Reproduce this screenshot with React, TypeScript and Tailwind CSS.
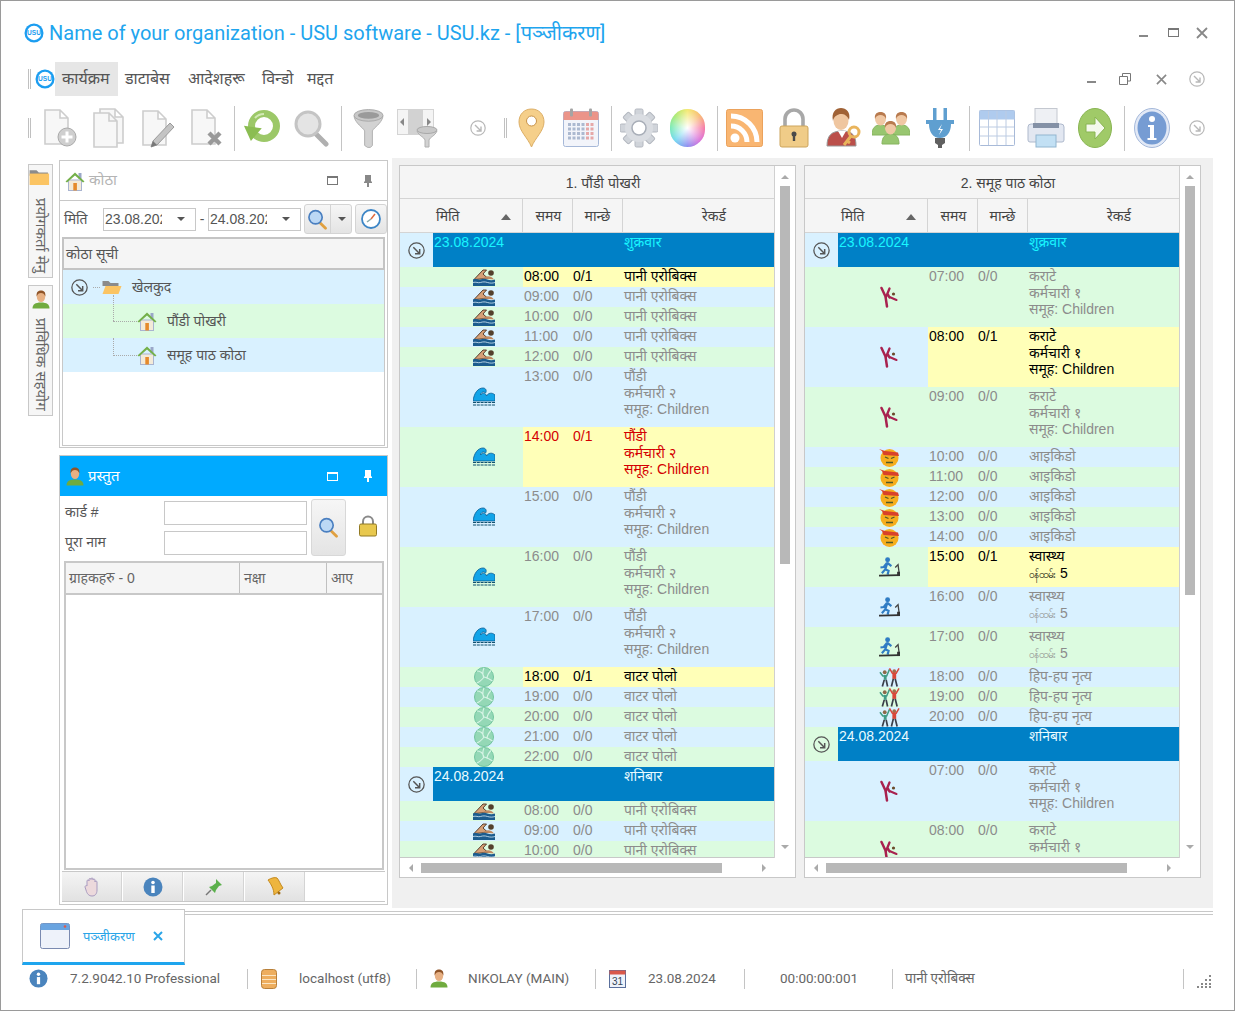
import type { ReactNode } from "react";

type IconProps = { className?: string };

function UsuLogo({ className }: IconProps) {
  return (
    <svg viewBox="0 0 20 20" className={className}>
      <circle cx="10" cy="10" r="9.5" fill="#1b9df0" />
      <circle cx="10" cy="10" r="7.2" fill="#fff" />
      <text x="10" y="12.4" textAnchor="middle" fontSize="6.6" fontWeight="700" fill="#1b9df0" fontFamily="Liberation Sans">
        USU
      </text>
    </svg>
  );
}

function CircleArrow({ className, color = "#b8b8b8" }: IconProps & { color?: string }) {
  return (
    <svg viewBox="0 0 16 16" className={className} fill="none" stroke={color}>
      <circle cx="8" cy="8" r="7.2" strokeWidth="1.2" />
      <path d="M5 5l6 6M11 6.6V11H6.6" strokeWidth="1.4" />
    </svg>
  );
}

function Doc({ x = 0, y = 0 }: { x?: number; y?: number }) {
  return (
    <path
      transform={`translate(${x} ${y})`}
      d="M1 1h15l8 8v26H1z M16 1v8h8"
      fill="#f7f7f7"
      stroke="#cdcdcd"
      strokeWidth="1.6"
    />
  );
}

function DocPlus({ className }: IconProps) {
  return (
    <svg viewBox="0 0 34 40" className={className}>
      <Doc x={1} y={1} />
      <circle cx="24" cy="29" r="9" fill="#cfcfcf" stroke="#aaa" />
      <path d="M24 23.5v11M18.5 29h11" stroke="#fff" strokeWidth="3" />
    </svg>
  );
}

function DocCopy({ className }: IconProps) {
  return (
    <svg viewBox="0 0 32 40" className={className}>
      <Doc x={7} y={0} />
      <Doc x={1} y={4} />
    </svg>
  );
}

function DocEdit({ className }: IconProps) {
  return (
    <svg viewBox="0 0 34 40" className={className}>
      <Doc x={1} y={2} />
      <path d="M29 15l4 4-17 18-6 2 2-6z" fill="#c4c4c4" stroke="#9a9a9a" />
      <path d="M10 39l2-6 4 4z" fill="#777" />
    </svg>
  );
}

function DocDelete({ className }: IconProps) {
  return (
    <svg viewBox="0 0 32 40" className={className}>
      <Doc x={1} y={1} />
      <path d="M19 25l11 11M30 25L19 36" stroke="#999" strokeWidth="4.4" />
    </svg>
  );
}

function Refresh({ className }: IconProps) {
  return (
    <svg viewBox="0 0 38 38" className={className} fill="none">
      <circle cx="21" cy="17" r="12.5" stroke="#9cc868" strokeWidth="7" />
      <path d="M0 18h18L9 32z" fill="#8bbd52" transform="rotate(8 9 24)" />
      <path d="M12 9a12 12 0 0 1 9-4" stroke="#d2e9b4" strokeWidth="2" />
    </svg>
  );
}

function Magnifier({ className, tint = "#e4e4e4", ring = "#c4c4c4", handle = "#b0b0b0" }: IconProps & { tint?: string; ring?: string; handle?: string }) {
  return (
    <svg viewBox="0 0 35 38" className={className}>
      <path d="M21 24l11 11" stroke={handle} strokeWidth="5" strokeLinecap="round" />
      <circle cx="14" cy="15" r="12" fill={tint} stroke={ring} strokeWidth="3" />
    </svg>
  );
}

function Funnel({ className }: IconProps) {
  return (
    <svg viewBox="0 0 32 40" className={className}>
      <path d="M1 8c2 8 9 11 11 15v15l3 2h3l2-2V23c2-4 9-7 11-15z" fill="#d2d2d2" stroke="#b0b0b0" />
      <ellipse cx="16" cy="7" rx="15" ry="6" fill="#c8c8c8" stroke="#a8a8a8" />
      <ellipse cx="16" cy="7" rx="11" ry="3.5" fill="#9a9a9a" />
    </svg>
  );
}

function ColumnFilter({ className }: IconProps) {
  return (
    <svg viewBox="0 0 41 40" className={className}>
      <rect x="0.5" y="1.5" width="36" height="25" fill="#f4f4f4" stroke="#d4d4d4" />
      <rect x="11" y="1.5" width="15" height="25" fill="#d2d2d2" />
      <path d="M7 10v8l-4-4zM30 10v8l4-4z" fill="#888" />
      <path d="M20 23c2 5 7 6 8 9v7h4v-7c1-3 6-4 8-9z" fill="#d2d2d2" stroke="#b0b0b0" />
      <ellipse cx="30" cy="22" rx="10" ry="3.5" fill="#c8c8c8" stroke="#a8a8a8" />
    </svg>
  );
}

function MapPin({ className }: IconProps) {
  return (
    <svg viewBox="0 0 27 40" className={className}>
      <path d="M13.5 1C6 1 1 6.5 1 14c0 9 9 16 12.5 25C17 30 26 23 26 14 26 6.5 21 1 13.5 1z" fill="#f5cf8a" stroke="#dcae66" />
      <circle cx="13.5" cy="13" r="5" fill="#fff" stroke="#c8934a" />
    </svg>
  );
}

function Calendar({ className }: IconProps) {
  const cells = [];
  for (let r = 0; r < 4; r++) {
    for (let c = 0; c < 6; c++) {
      cells.push(
        <rect key={`${r}-${c}`} x={5 + c * 4.5} y={15 + r * 4.5} width="3" height="3" fill={c > 3 ? "#e6a8a8" : "#acb9d0"} />,
      );
    }
  }
  return (
    <svg viewBox="0 0 36 40" className={className}>
      <rect x="0.5" y="3.5" width="35" height="35" rx="2" fill="#f2f4fa" stroke="#a6b8d8" />
      <path d="M0.5 12V5.5a2 2 0 0 1 2-2h31a2 2 0 0 1 2 2V12z" fill="#eb9489" />
      <rect x="7" y="0.5" width="3" height="8" rx="1" fill="#a4a4a4" />
      <rect x="26" y="0.5" width="3" height="8" rx="1" fill="#a4a4a4" />
      {cells}
    </svg>
  );
}

function Gear({ className }: IconProps) {
  const teeth = [0, 45, 90, 135];
  return (
    <svg viewBox="0 0 38 40" className={className}>
      {teeth.map((a) => (
        <rect key={a} x="15" y="1" width="8" height="38" rx="1.5" fill="#d0d4da" stroke="#b4b8c0" transform={`rotate(${a} 19 20)`} />
      ))}
      <circle cx="19" cy="20" r="14" fill="#dadde2" />
      <circle cx="19" cy="20" r="7" fill="#fff" stroke="#a8aeb8" strokeWidth="1.5" />
    </svg>
  );
}

function Rss({ className }: IconProps) {
  return (
    <svg viewBox="0 0 37 38" className={className} fill="none">
      <rect x="0.5" y="0.5" width="36" height="37" rx="2" fill="#f9b672" stroke="#eba25c" />
      <circle cx="9" cy="29" r="4.5" fill="#fff" />
      <path d="M5 17a16 16 0 0 1 16 16" stroke="#fff" strokeWidth="5" />
      <path d="M5 7a26 26 0 0 1 26 26" stroke="#fff" strokeWidth="5" />
    </svg>
  );
}

function Padlock({ className }: IconProps) {
  return (
    <svg viewBox="0 0 30 40" className={className}>
      <path d="M6 19V11a9 9 0 0 1 18 0v8" fill="none" stroke="#a8a8a8" strokeWidth="3.6" />
      <rect x="1" y="18" width="28" height="21" rx="2" fill="#f0cc88" stroke="#cda55c" />
      <circle cx="15" cy="26" r="2.5" fill="#4a4a4a" />
      <rect x="13.8" y="26" width="2.4" height="7" fill="#4a4a4a" />
    </svg>
  );
}

function PersonKey({ className }: IconProps) {
  return (
    <svg viewBox="0 0 35 40" className={className}>
      <path d="M1 38c0-10 4-15 15-15s14 5 14 15z" fill="#bb4f4a" stroke="#999" />
      <path d="M12 23l4 7 4-7z" fill="#fff" />
      <ellipse cx="15" cy="13" rx="7.5" ry="9" fill="#efc6a0" />
      <path d="M7 13C5 4 10 0 15 0s10 4 8 12c-2-5-5-6-8-6-3 0-7 2-8 7z" fill="#a06236" />
      <circle cx="28" cy="24" r="5" fill="none" stroke="#e9b45c" strokeWidth="3" />
      <path d="M25 28l-7 9M21 33l3 2" stroke="#e9b45c" strokeWidth="3" />
    </svg>
  );
}

function PeopleGroup({ className }: IconProps) {
  const one = (x: number, y: number, k: number) => (
    <g key={k} transform={`translate(${x} ${y})`}>
      <path d="M0 24c0-7 3-10 8.5-10S17 17 17 24z" fill="#98c670" stroke="#86b45e" />
      <ellipse cx="8.5" cy="8" rx="5.5" ry="6.5" fill="#f0c8a4" />
      <path d="M3 8C2 2 6 1 8.5 1S15 2 14 8c-1-3-3-4-5.500-4S4 5 3 8z" fill="#b87a4e" />
    </g>
  );
  return (
    <svg viewBox="0 0 38 40" className={className}>
      {one(0, 3, 1)}
      {one(21, 3, 2)}
      {one(10, 12, 3)}
    </svg>
  );
}

function Plug({ className }: IconProps) {
  return (
    <svg viewBox="0 0 28 42" className={className}>
      <rect x="7" y="1" width="3.5" height="13" fill="#5f9fd0" />
      <rect x="17.5" y="1" width="3.5" height="13" fill="#5f9fd0" />
      <path d="M0 13h28v4H25c0 8-4 14-11 14S3 25 3 17H0z" fill="#5f9fd0" />
      <path d="M16 17l-4 6h3l-2 5 4-6h-3z" fill="#fff" />
      <path d="M9 31h10v5l-3 2v3h-4v-3l-3-2z" fill="#606060" />
    </svg>
  );
}

function TableIcon({ className }: IconProps) {
  return (
    <svg viewBox="0 0 36 38" className={className}>
      <rect x="0.5" y="1.5" width="35" height="35" rx="1" fill="#fff" stroke="#a8bad8" />
      <rect x="0.5" y="1.5" width="35" height="9" fill="#afcbee" />
      <path d="M9.500 2v34M18 2v34M27 2v34M1 18h34M1 27h34" stroke="#bccbe2" />
    </svg>
  );
}

function Printer({ className }: IconProps) {
  return (
    <svg viewBox="0 0 38 40" className={className}>
      <rect x="8" y="0.5" width="22" height="20" fill="#eef0f4" stroke="#c4c8d0" />
      <path d="M1 19a3 3 0 0 1 3-3h30a3 3 0 0 1 3 3v13a2 2 0 0 1-2 2H3a2 2 0 0 1-2-2z" fill="#e2e7f1" stroke="#aeb9cc" />
      <rect x="6" y="15" width="26" height="5" fill="#8491a6" />
      <rect x="9" y="27" width="20" height="12" fill="#c2e0f4" stroke="#92b6d0" />
    </svg>
  );
}

function GoArrow({ className }: IconProps) {
  return (
    <svg viewBox="0 0 34 40" className={className}>
      <ellipse cx="17" cy="20" rx="16.5" ry="19.5" fill="#a0ca68" stroke="#88b452" />
      <path d="M8 16h9v-7l10 11-10 11v-7H8z" fill="#f4f9ec" stroke="#88b452" />
    </svg>
  );
}

function InfoBall({ className }: IconProps) {
  return (
    <svg viewBox="0 0 36 40" className={className}>
      <ellipse cx="18" cy="20" rx="17.5" ry="19.5" fill="#e2e9f6" stroke="#a4b8da" />
      <ellipse cx="18" cy="20" rx="14.5" ry="16.5" fill="#769cd3" />
      <circle cx="18" cy="11" r="3" fill="#fff" />
      <path d="M14 17h6v13h2.500v2h-9v-2H16V19h-2z" fill="#fff" />
    </svg>
  );
}

function SmallInfo({ className }: IconProps) {
  return (
    <svg viewBox="0 0 20 20" className={className}>
      <circle cx="10" cy="10" r="9.5" fill="#4a84bd" />
      <circle cx="10" cy="5.5" r="1.8" fill="#fff" />
      <rect x="8.3" y="8.5" width="3.4" height="7.5" fill="#fff" />
    </svg>
  );
}

function House({ className }: IconProps) {
  return (
    <svg viewBox="0 0 20 20" className={className}>
      <rect x="13.5" y="2" width="3" height="6" fill="#9aa7c8" />
      <rect x="3.5" y="9" width="13" height="10.5" fill="#f3ead8" stroke="#a9b4d0" />
      <rect x="8.3" y="12" width="3.6" height="7.5" fill="#e58a2c" />
      <path d="M0.500 10.500L10 1.500l9.500 9-1.500 1L10 4.500 2 11.500z" fill="#74b04a" />
    </svg>
  );
}

function Person({ className }: IconProps) {
  return (
    <svg viewBox="0 0 18 19" className={className}>
      <path d="M0.500 18.500c0-4 2.500-6 8.500-6s8.500 2 8.500 6z" fill="#70ab3f" />
      <ellipse cx="9" cy="6.5" rx="4.2" ry="5.5" fill="#e7b083" />
      <path d="M4.700 6.500C4 2 6.500 0.500 9 0.500s5 1.500 4.300 6c-.7-2.500-2.300-3.500-4.300-3.500S5.400 4 4.700 6.500z" fill="#8f5428" />
    </svg>
  );
}

function Folder({ className, open = false }: IconProps & { open?: boolean }) {
  return (
    <svg viewBox="0 0 20 14" className={className}>
      <path d="M0.500 13V1h6l2 2h8v3H0.500" fill="#8b8b8b" />
      {open ? <path d="M0.500 14l3-8h16l-3 8z" fill="#fbc463" /> : <rect x="0.5" y="4" width="17" height="10" fill="#fbc463" />}
    </svg>
  );
}

function Swimmer({ className }: IconProps) {
  return (
    <svg viewBox="0 0 22 17" className={className}>
      <path d="M1 10.500L10 1h3.500L10 5l5 4.500z" fill="#d6a077" stroke="#4a3020" strokeWidth="0.9" />
      <circle cx="18" cy="4" r="2.800" fill="#54402c" />
      <path d="M10 9.500c3-3 8-3 11 1z" fill="#c08a62" />
      <path d="M0 10.500c3-1.500 5 1 7.500 0s4.500-1 7 0 5 1 7.500 0V17H0z" fill="#1c5c8e" />
      <path d="M0 13.500c3-1 5 .8 7.500 0s4.500-.8 7 0 5 .8 7.500 0" stroke="#d4e8f5" strokeWidth="0.8" fill="none" />
    </svg>
  );
}

function Wave({ className }: IconProps) {
  return (
    <svg viewBox="0 0 22 20" className={className}>
      <path d="M0 14C1 6 5 1 10 1c3 0 4 3 2.500 5C11 4 8 5 7.500 8 10 5 13 6 13.500 9 15 6 19 5 22 8v6z" fill="#12a4e8" stroke="#0b5d92" strokeWidth="0.8" />
      <path d="M0 15.500h22M0 18h22" stroke="#10506f" strokeWidth="1" strokeDasharray="3 0.8" />
    </svg>
  );
}

function Volley({ className }: IconProps) {
  return (
    <svg viewBox="0 0 20 20" className={className} fill="none">
      <circle cx="10" cy="10" r="9.5" fill="#94d8b6" stroke="#70c49e" />
      <path d="M10 .8c-2 5-1 9 0 9.200 3 .5 7 3 8.500 4M10 10c-2 3-6 6-7.500 6M3 4c3 0 6 2 7 6M17 3.500c-2 2-4 4-4 8.500" stroke="#d8f4e6" strokeWidth="1.1" />
    </svg>
  );
}

function Karate({ className }: IconProps) {
  return (
    <svg viewBox="0 0 18 22" className={className} fill="none" stroke="#a8224f" strokeLinecap="round">
      <path d="M1.500 2l4 8.500 1.500 10" strokeWidth="2.500" />
      <path d="M6 11L9.500 2.500M8 8.500l1.500 3" strokeWidth="2.300" />
      <path d="M9.500 11l7 3" strokeWidth="2" />
      <circle cx="13.500" cy="8" r="1.600" fill="#6a4a2a" stroke="none" />
    </svg>
  );
}

function Aikido({ className }: IconProps) {
  return (
    <svg viewBox="0 0 20 20" className={className}>
      <circle cx="10.500" cy="11" r="9" fill="#f6ae1e" />
      <path d="M0 2l6 2 13 1.500 1 3.500-15.500-1L3 4z" fill="#d8412a" />
      <path d="M6 10l3.500 1.500M15.500 10L12 11.500M7 15.500h7" stroke="#4f5a2a" strokeWidth="1.300" fill="none" />
    </svg>
  );
}

function Treadmill({ className }: IconProps) {
  return (
    <svg viewBox="0 0 22 21" className={className} fill="none">
      <circle cx="9" cy="2.800" r="2.600" fill="#2f7cc4" />
      <path d="M8.500 6L5 10.500l-3.500.5M8.500 6l4.500 3.500M8.500 7l-2 6 3.500 1.500-1 4M6.500 13L3 17" stroke="#2f7cc4" strokeWidth="2.300" />
      <path d="M17 11l3-3 1 8" stroke="#444" strokeWidth="1.400" />
      <path d="M0 19.500l21-.5" stroke="#333" strokeWidth="1.800" />
      <path d="M19 15.500h3V20h-3z" fill="#333" />
    </svg>
  );
}

function Dancers({ className }: IconProps) {
  return (
    <svg viewBox="0 0 22 20" className={className} fill="none">
      <circle cx="6" cy="5" r="2" fill="#8c6a4a" />
      <circle cx="16" cy="4" r="2" fill="#a0704c" />
      <path d="M1 5l3 4h4l3-7" stroke="#3f9c86" strokeWidth="1.6" />
      <path d="M5 8h3v5H5z" fill="#3f9c86" />
      <path d="M5.500 13L3.500 20M7.500 13L9 20" stroke="#3a3f4a" strokeWidth="1.8" />
      <path d="M11 1l3 5h4l3-5" stroke="#d9483a" strokeWidth="1.6" />
      <path d="M14 6h4v6h-4z" fill="#d9483a" />
      <path d="M15 12l-2 8M17 12l2 8" stroke="#3a3f4a" strokeWidth="1.8" />
    </svg>
  );
}

type Kind = "swim" | "wave" | "ball" | "karate" | "aikido" | "run" | "dance";

const kindIcon: Record<Kind, ReactNode> = {
  swim: <Swimmer className="w-[22px] h-[17px]" />,
  wave: <Wave className="w-[22px] h-[20px]" />,
  ball: <Volley className="w-[20px] h-[20px] mr-px" />,
  karate: <Karate className="w-[18px] h-[22px] mr-[2px]" />,
  aikido: <Aikido className="w-[20px] h-[20px] mr-px" />,
  run: <Treadmill className="w-[21px] h-[20px]" />,
  dance: <Dancers className="w-[21px] h-[20px]" />,
};

type Row =
  | { group: true; date: string; day: string; cyan?: boolean }
  | { group?: false; time: string; people: string; lines: string[]; kind: Kind; mark?: "yellow" | "red" };

const pool = (time: string, people = "0/0", mark?: "yellow"): Row => ({ time, people, lines: ["पानी एरोबिक्स"], kind: "swim", mark });
const laps = (time: string, people = "0/0", mark?: "red"): Row => ({ time, people, lines: ["पौंडी", "कर्मचारी २", "समूह: Children"], kind: "wave", mark });
const polo = (time: string, people = "0/0", mark?: "yellow"): Row => ({ time, people, lines: ["वाटर पोलो"], kind: "ball", mark });
const karate = (time: string, people = "0/0", mark?: "yellow"): Row => ({ time, people, lines: ["कराटे", "कर्मचारी १", "समूह: Children"], kind: "karate", mark });
const aikido = (time: string): Row => ({ time, people: "0/0", lines: ["आइकिडो"], kind: "aikido" });
const health = (time: string, people = "0/0", mark?: "yellow"): Row => ({ time, people, lines: ["स्वास्थ्य", "ဝန်ထမ်း 5"], kind: "run", mark });
const dance = (time: string): Row => ({ time, people: "0/0", lines: ["हिप-हप नृत्य"], kind: "dance" });

const poolRows: Row[] = [
  { group: true, date: "23.08.2024", day: "शुक्रवार", cyan: true },
  pool("08:00", "0/1", "yellow"),
  pool("09:00"),
  pool("10:00"),
  pool("11:00"),
  pool("12:00"),
  laps("13:00"),
  laps("14:00", "0/1", "red"),
  laps("15:00"),
  laps("16:00"),
  laps("17:00"),
  polo("18:00", "0/1", "yellow"),
  polo("19:00"),
  polo("20:00"),
  polo("21:00"),
  polo("22:00"),
  { group: true, date: "24.08.2024", day: "शनिबार" },
  pool("08:00"),
  pool("09:00"),
  pool("10:00"),
];

const hallRows: Row[] = [
  { group: true, date: "23.08.2024", day: "शुक्रवार", cyan: true },
  karate("07:00"),
  karate("08:00", "0/1", "yellow"),
  karate("09:00"),
  aikido("10:00"),
  aikido("11:00"),
  aikido("12:00"),
  aikido("13:00"),
  aikido("14:00"),
  health("15:00", "0/1", "yellow"),
  health("16:00"),
  health("17:00"),
  dance("18:00"),
  dance("19:00"),
  dance("20:00"),
  { group: true, date: "24.08.2024", day: "शनिबार" },
  karate("07:00"),
  karate("08:00"),
];

function RecordLine({ line }: { line: string }) {
  // the staff line is drawn much smaller in a Burmese font, the number stays normal
  if (line.startsWith("ဝန်")) {
    const [word, num] = line.split(" ");
    return (
      <div>
        <span className="text-[10px]">{word}</span> {num}
      </div>
    );
  }
  return <div>{line}</div>;
}

function GridRow({ row, index }: { row: Row; index: number }) {
  const bg = index % 2 === 0 ? "bg-[#d9f1ff]" : "bg-[#dcfbe0]";
  if (row.group) {
    return (
      <div className={`flex h-[34px] ${bg}`}>
        <div className="w-[33px] flex items-center justify-center">
          <CircleArrow className="w-[17px] h-[17px]" color="#555" />
        </div>
        <div className={`flex-1 flex bg-[#0080c6] ${row.cyan ? "text-[#19f5ff]" : "text-[#e8fbff]"} leading-[17px] pt-px`}>
          <div className="w-[190px] pl-px">{row.date}</div>
          <div className="pl-px">{row.day}</div>
        </div>
      </div>
    );
  }
  const tall = row.lines.length === 3 ? "h-[60px]" : row.lines.length === 2 ? "h-[40px]" : "h-[20px]";
  const text = row.mark === "red" ? "text-[#d40000] bg-[#ffffb8]" : row.mark ? "text-black bg-[#ffffb8]" : "text-[#8c8c8c]";
  return (
    <div className={`flex ${tall} ${bg}`}>
      <div className="w-[33px]" />
      <div className="w-[90px] flex items-center justify-end pr-[28px]">{kindIcon[row.kind]}</div>
      <div className={`flex-1 flex leading-[16.5px] pt-px ${text}`}>
        <div className="w-[50px] pl-px">{row.time}</div>
        <div className="w-[50px]">{row.people}</div>
        <div className="flex-1 whitespace-nowrap pl-px">
          {row.lines.map((line) => (
            <RecordLine key={line} line={line} />
          ))}
        </div>
      </div>
    </div>
  );
}

function GridPanel({ title, rows, thumb }: { title: string; rows: Row[]; thumb: string }) {
  return (
    <div className="w-[397px] h-[713px] border border-[#c8c8c8] bg-white flex flex-col">
      <div className="flex h-[692px]">
        <div className="w-[375px] border-r border-[#d0d0d0] flex flex-col">
          <div className="h-[33px] bg-[#f5f5f5] border-b border-[#d4d4d4] flex items-center justify-center pt-[2px] pl-[32px] text-[#444]">{title}</div>
          <div className="h-[34px] bg-[#f5f5f5] border-b border-[#d4d4d4] flex text-[#444] items-center">
            <div className="w-[123px] h-full border-r border-[#d4d4d4] flex items-center pl-[36px] pt-[2px]">
              मिति
              <span className="ml-[41px] w-0 h-0 border-x-[5px] border-x-transparent border-b-[6px] border-b-[#666]" />
            </div>
            <div className="w-[50px] h-full border-r border-[#d4d4d4] flex items-center justify-center pt-[2px] pl-[2px]">समय</div>
            <div className="w-[50px] h-full border-r border-[#d4d4d4] flex items-center justify-center pt-[2px]">मान्छे</div>
            <div className="flex-1 pl-[79px] pt-[2px]">रेकर्ड</div>
          </div>
          <div className="flex-1 overflow-hidden border-b border-[#c8c8c8]">
            {rows.map((row, i) => (
              <GridRow key={i} row={row} index={i} />
            ))}
          </div>
        </div>
        <div className="flex-1 flex flex-col items-center pt-[9px]">
          <span className="w-0 h-0 border-x-[4px] border-x-transparent border-b-[4px] border-b-[#aaa]" />
          <div className={`w-[10px] mt-[7px] bg-[#b8b8b8] ${thumb}`} />
          <span className="mt-auto mb-[9px] w-0 h-0 border-x-[4px] border-x-transparent border-t-[4px] border-t-[#aaa]" />
        </div>
      </div>
      <div className="flex-1 flex items-center pl-[9px] pr-[29px]">
        <span className="w-0 h-0 border-y-[4px] border-y-transparent border-r-[4px] border-r-[#aaa]" />
        <div className="w-[301px] h-[10px] ml-[8px] bg-[#b8b8b8]" />
        <span className="ml-auto w-0 h-0 border-y-[4px] border-y-transparent border-l-[4px] border-l-[#aaa]" />
      </div>
    </div>
  );
}

function DateBox({ value }: { value: string }) {
  return (
    <div className="w-[93px] h-[23px] border border-[#c8c8c8] bg-white flex items-center pl-px text-[#555] overflow-hidden">
      <span className="w-[57px] overflow-hidden whitespace-nowrap">{value}</span>
      <span className="ml-[15px] w-0 h-0 border-x-[4px] border-x-transparent border-t-[4px] border-t-[#555]" />
    </div>
  );
}

function PanelHeader({ active, icon, title }: { active?: boolean; icon: ReactNode; title: string }) {
  const tone = active ? "border-white" : "border-[#777]";
  return (
    <div className={`h-[40px] flex items-center shrink-0 pl-[5px] ${active ? "bg-[#00aaff] text-white" : "border-b border-[#c8c8c8] text-[#b4b4b4]"}`}>
      {icon}
      <span className="ml-[4px] text-[15px]">{title}</span>
      <span className={`ml-auto w-[11px] h-[9px] border border-t-2 ${tone}`} />
      <svg viewBox="0 0 8 12" className="w-[8px] h-[12px] ml-[26px] mr-[15px]">
        <path d="M1 0h6v6l1 1v1H5v4H3V8H0V7l1-1z" fill={active ? "#fff" : "#888"} />
      </svg>
    </div>
  );
}

function LeftStrip() {
  return (
    <div className="w-[25px] pt-[6px] flex flex-col gap-[7px]">
      <div className="h-[114px] border border-[#c8c8c8] bg-[#f6f6f6] flex flex-col items-center overflow-hidden">
        <Folder className="w-[23px] h-[16px] mt-[4px]" />
        <span className="mt-[13px] [writing-mode:vertical-rl] text-[15px] leading-[20px] text-[#666] whitespace-nowrap">प्रयोगकर्ता मेनु</span>
      </div>
      <div className="h-[131px] border border-[#c8c8c8] bg-[#f6f6f6] flex flex-col items-center overflow-hidden">
        <Person className="w-[18px] h-[19px] mt-[4px]" />
        <span className="mt-[9px] [writing-mode:vertical-rl] text-[15px] leading-[20px] text-[#666] whitespace-nowrap">प्राविधिक सहयोग</span>
      </div>
    </div>
  );
}

function RoomsPanel() {
  return (
    <div className="h-[288px] border border-[#c8c8c8] bg-white flex flex-col">
      <PanelHeader icon={<House className="w-[20px] h-[20px]" />} title="कोठा" />
      <div className="h-[36px] flex items-center pl-[4px] text-[#555] shrink-0">
        <span className="w-[39px]">मिति</span>
        <DateBox value="23.08.2024" />
        <span className="w-[12px] text-center">-</span>
        <DateBox value="24.08.2024" />
        <div className="ml-[3px] w-[48px] h-[30px] border border-[#d4d4d4] rounded-[3px] bg-gradient-to-b from-[#f6f6f6] to-[#e4e4e4] flex items-center">
          <Magnifier className="w-[21px] h-[21px] ml-[2px]" tint="#bcd8f5" ring="#4a7fc0" handle="#e0a040" />
          <span className="ml-[2px] w-px h-full bg-[#d4d4d4]" />
          <span className="ml-[7px] w-0 h-0 border-x-[4px] border-x-transparent border-t-[4px] border-t-[#555]" />
        </div>
        <div className="ml-[3px] w-[32px] h-[30px] border border-[#d4d4d4] rounded-[3px] bg-gradient-to-b from-[#f6f6f6] to-[#e4e4e4] flex items-center justify-center">
          <svg viewBox="0 0 20 20" className="w-[20px] h-[20px]" fill="none">
            <circle cx="10" cy="10" r="9" fill="#fff" stroke="#3d86c6" strokeWidth="1.8" />
            <path d="M10 10l4-5" stroke="#e06a3c" strokeWidth="1.5" />
            <path d="M10 10L6 13" stroke="#8aa" strokeWidth="1.5" />
          </svg>
        </div>
      </div>
      <div className="mx-[2px] mb-[1px] flex-1 border border-[#c8c8c8] flex flex-col text-[#555]">
        <div className="h-[33px] shrink-0 bg-[#f5f5f5] border-2 border-[#c4c4c4] flex items-center pt-px pl-[2px] -m-px">कोठा सूची</div>
        <div className="h-[34px] mt-px bg-[#d9f1ff] flex items-center pl-[8px]">
          <CircleArrow className="w-[17px] h-[17px]" color="#555" />
          <span className="ml-[5px] w-[7px] border-t border-dotted border-[#aaa]" />
          <Folder className="w-[20px] h-[14px] ml-[2px]" open />
          <span className="ml-[10px] pt-px">खेलकुद</span>
        </div>
        <div className="h-[34px] bg-[#dcfbe0] flex items-center pl-[50px] relative">
          <span className="absolute left-[50px] -top-[9px] h-[26px] border-l border-dotted border-[#aaa]" />
          <span className="w-[24px] border-t border-dotted border-[#aaa]" />
          <House className="w-[20px] h-[20px]" />
          <span className="ml-[10px] pt-px">पौंडी पोखरी</span>
        </div>
        <div className="h-[34px] bg-[#d9f1ff] flex items-center pl-[50px] relative">
          <span className="absolute left-[50px] top-0 h-[16px] border-l border-dotted border-[#aaa]" />
          <span className="w-[24px] border-t border-dotted border-[#aaa]" />
          <House className="w-[20px] h-[20px]" />
          <span className="ml-[10px] pt-px">समूह पाठ कोठा</span>
        </div>
      </div>
    </div>
  );
}

function ToolButton({ children }: { children: ReactNode }) {
  return (
    <div className="w-[60px] bg-gradient-to-b from-[#f4f4f4] to-[#e2e2e2] border-r border-[#d4d4d4] flex items-center justify-center">{children}</div>
  );
}

function VisitorsPanel() {
  return (
    <div className="mt-[7px] h-[450px] border border-[#c8c8c8] bg-white flex flex-col">
      <PanelHeader active icon={<Person className="w-[18px] h-[19px] ml-px" />} title="प्रस्तुत" />
      <div className="h-[65px] shrink-0 flex text-[#555] pl-[5px]">
        <div className="w-[99px] pt-px leading-[30px]">
          <div>कार्ड #</div>
          <div>पूरा नाम</div>
        </div>
        <div className="pt-[5px] flex flex-col gap-[6px]">
          <div className="w-[143px] h-[24px] border border-[#c8c8c8]" />
          <div className="w-[143px] h-[24px] border border-[#c8c8c8]" />
        </div>
        <div className="ml-[4px] mt-[3px] w-[35px] h-[57px] border border-[#d8d8d8] rounded-[3px] bg-gradient-to-b from-[#f6f6f6] to-[#e4e4e4] flex items-center justify-center">
          <Magnifier className="w-[21px] h-[21px]" tint="#bcd8f5" ring="#4a7fc0" handle="#e0a040" />
        </div>
        <svg viewBox="0 0 18 22" className="w-[18px] h-[22px] ml-[13px] mt-[19px]">
          <path d="M4 10V6.500a5 5 0 0 1 10 0V10" fill="none" stroke="#8a8a8a" strokeWidth="2" />
          <rect x="0.5" y="9" width="17" height="12" rx="1.5" fill="#e8c84e" stroke="#927a24" />
        </svg>
      </div>
      <div className="flex-1 border-2 border-[#c8c8c8] flex flex-col text-[#666] ml-[4px] mr-[3px]">
        <div className="h-[32px] shrink-0 bg-[#f5f5f5] border-b-2 border-[#c8c8c8] flex">
          <div className="w-[174px] pl-[3px] border-r border-[#c0c0c0] flex items-center">ग्राहकहरु - 0</div>
          <div className="w-[87px] pl-[4px] border-r border-[#c0c0c0] flex items-center">नक्षा</div>
          <div className="pl-[4px] flex items-center">आए</div>
        </div>
      </div>
      <div className="mx-[2px] mt-px mb-[2px] h-[31px] shrink-0 border-y border-[#c8c8c8] flex gap-px">
        <ToolButton>
          <svg viewBox="0 0 16 20" className="w-[16px] h-[20px]">
            <path d="M3 9V4a1 1 0 0 1 2 0V2.500a1 1 0 0 1 2 0V2a1 1 0 0 1 2 0v1a1 1 0 0 1 2 0v2a1 1 0 0 1 2 0v8c0 4-2 6-5 6s-5-2-6-6L1 10c0-1 1-2 2-1z" fill="#ecd9dc" stroke="#a89bc0" />
          </svg>
        </ToolButton>
        <ToolButton>
          <SmallInfo className="w-[20px] h-[20px]" />
        </ToolButton>
        <ToolButton>
          <svg viewBox="0 0 18 18" className="w-[18px] h-[18px]">
            <path d="M11 1l6 6-3 1-3 4-1 3-6-6 3-1 4-3z" fill="#5bb04c" />
            <path d="M6 12l-5 5" stroke="#777" strokeWidth="1.5" />
          </svg>
        </ToolButton>
        <ToolButton>
          <svg viewBox="0 0 20 20" className="w-[20px] h-[20px]">
            <path d="M3 3c3-2 7-3 9-2 2 2 3 6 6 10l-9 7C9 12 6 7 3 3z" fill="#eeb53e" stroke="#c48a20" />
            <circle cx="14" cy="16" r="1.5" fill="#a06a10" />
          </svg>
        </ToolButton>
      </div>
    </div>
  );
}

function Toolbar() {
  const sep = "w-px h-[45px] bg-[#c4c4c4]";
  const grip = "w-[3px] h-[20px] border-x border-[#c0c0c0]";
  return (
    <div className="h-[54px] mt-[5px] flex items-center shrink-0">
      <span className={`ml-[27px] ${grip}`} />
      <DocPlus className="ml-[12px] w-[34px] h-[40px]" />
      <DocCopy className="ml-[15px] w-[32px] h-[40px]" />
      <DocEdit className="ml-[17px] w-[34px] h-[40px]" />
      <DocDelete className="ml-[15px] w-[32px] h-[40px]" />
      <span className={`ml-[12px] ${sep}`} />
      <Refresh className="ml-[8px] w-[38px] h-[38px]" />
      <Magnifier className="ml-[13px] w-[35px] h-[38px]" />
      <span className={`ml-[12px] ${sep}`} />
      <Funnel className="ml-[11px] w-[31px] h-[40px]" />
      <ColumnFilter className="ml-[13px] w-[41px] h-[40px]" />
      <CircleArrow className="ml-[32px] w-[16px] h-[16px]" />
      <span className={`ml-[18px] ${grip}`} />
      <MapPin className="ml-[11px] w-[27px] h-[40px]" />
      <Calendar className="ml-[18px] w-[36px] h-[40px]" />
      <span className={`ml-[12px] ${sep}`} />
      <Gear className="ml-[8px] w-[38px] h-[40px]" />
      <div className="ml-[12px] w-[35px] h-[38px] rounded-full bg-[radial-gradient(circle,#ffffff_0%,#ffffff00_75%),conic-gradient(#f4e86a,#f8b46a,#f46a9c,#d86ad8,#8a8af0,#6ad4f0,#6ae8b0,#a4e86a,#f4e86a)]" />
      <span className={`ml-[12px] ${sep}`} />
      <Rss className="ml-[8px] w-[37px] h-[38px]" />
      <Padlock className="ml-[16px] w-[30px] h-[40px]" />
      <PersonKey className="ml-[17px] w-[35px] h-[40px]" />
      <PeopleGroup className="ml-[11px] w-[38px] h-[40px]" />
      <Plug className="ml-[16px] w-[28px] h-[42px]" />
      <span className={`ml-[15px] ${sep}`} />
      <TableIcon className="ml-[9px] w-[36px] h-[38px]" />
      <Printer className="ml-[12px] w-[38px] h-[40px]" />
      <GoArrow className="ml-[13px] w-[34px] h-[40px]" />
      <span className={`ml-[12px] ${sep}`} />
      <InfoBall className="ml-[9px] w-[36px] h-[40px]" />
      <CircleArrow className="ml-[19px] w-[16px] h-[16px]" />
    </div>
  );
}

export default function App() {
  const statusSep = "w-px h-[20px] bg-[#c4c4c4]";
  return (
    <div className="w-[1235px] h-[1011px] border border-[#9a9a9a] bg-white flex flex-col overflow-hidden text-[14px] [font-family:'Liberation_Sans','Noto_Sans',sans-serif]">
      <div className="h-[57px] shrink-0 flex items-center pt-[6px] pl-[23px] text-[#1ea5ee]">
        <UsuLogo className="w-[20px] h-[20px]" />
        <span className="ml-[5px] text-[20px] whitespace-nowrap [font-family:'Roboto','Noto_Sans',sans-serif]">Name of your organization - USU software - USU.kz - [पञ्जीकरण]</span>
        <span className="ml-auto w-[9px] h-[2px] mt-[6px] bg-[#888]" />
        <span className="ml-[20px] w-[11px] h-[9px] border border-t-2 border-[#777]" />
        <svg viewBox="0 0 12 12" className="ml-[17px] mr-[26px] w-[12px] h-[12px]" stroke="#888" strokeWidth="1.8">
          <path d="M1 1l10 10M11 1L1 11" />
        </svg>
      </div>
      <div className="h-[34px] mt-[4px] shrink-0 flex items-center text-[16px] text-[#555]">
        <span className="ml-[27px] w-[3px] h-[20px] border-x border-[#c0c0c0]" />
        <UsuLogo className="ml-[4px] w-[20px] h-[20px]" />
        <div className="h-full w-[63px] bg-[#e6e6e6] flex items-center pl-[7px]">कार्यक्रम</div>
        <span className="ml-[7px] w-[63px]">डाटाबेस</span>
        <span className="w-[74px]">आदेशहरू</span>
        <span className="w-[45px]">विन्डो</span>
        <span>मद्दत</span>
        <span className="ml-auto w-[9px] h-[2px] mt-[6px] bg-[#888]" />
        <svg viewBox="0 0 12 12" className="ml-[23px] w-[12px] h-[12px]" fill="none" stroke="#777">
          <path d="M3.500 3V.5h8V8H9M.5 3.500H8.500V11.500H.5z" />
        </svg>
        <svg viewBox="0 0 12 12" className="ml-[25px] w-[11px] h-[11px]" stroke="#888" strokeWidth="1.8">
          <path d="M1 1l10 10M11 1L1 11" />
        </svg>
        <CircleArrow className="ml-[22px] mr-[29px] w-[16px] h-[16px]" />
      </div>
      <Toolbar />
      <div className="mt-[3px] h-[750px] shrink-0 flex pl-[27px]">
        <LeftStrip />
        <div className="ml-[6px] w-[329px] pt-[2px]">
          <RoomsPanel />
          <VisitorsPanel />
        </div>
        <div className="ml-[4px] w-[821px] bg-[#f0f0f0] flex gap-[8px] pl-[7px] pt-[7px]">
          <GridPanel title="1. पौंडी पोखरी" rows={poolRows} thumb="h-[378px]" />
          <GridPanel title="2. समूह पाठ कोठा" rows={hallRows} thumb="h-[409px]" />
        </div>
      </div>
      <div className="mt-px ml-[21px] w-[1191px] h-[56px] shrink-0 flex">
        <div className="w-[163px] border-x border-t border-[#c8c8c8] border-b-[3px] border-b-[#1ea5ee] flex items-center pl-[17px] text-[#2aa5e8] bg-white">
          <svg viewBox="0 0 30 26" className="w-[30px] h-[26px]">
            <rect x="0.5" y="0.5" width="29" height="25" rx="2" fill="#eef2fa" stroke="#7a8ab0" />
            <path d="M0.500 7V2.500a2 2 0 0 1 2-2h25a2 2 0 0 1 2 2V7z" fill="#6aa4e0" />
            <circle cx="25" cy="3.5" r="1.3" fill="#e05a4a" />
          </svg>
          <span className="ml-[13px] text-[13px] pt-px">पञ्जीकरण</span>
          <svg viewBox="0 0 10 10" className="ml-[18px] w-[10px] h-[10px]" stroke="#2aa5e8" strokeWidth="2">
            <path d="M1 1l8 8M9 1L1 9" />
          </svg>
        </div>
        <div className="flex-1 h-[4px] mt-[2px] border-y border-[#c8c8c8]" />
      </div>
      <div className="h-[27px] shrink-0 flex items-center text-[13.5px] text-[#666] whitespace-nowrap [font-family:'Roboto','Noto_Sans',sans-serif]">
        <SmallInfo className="ml-[28px] w-[19px] h-[19px]" />
        <span className="ml-[22px] w-[177px]">7.2.9042.10 Professional</span>
        <span className={statusSep} />
        <svg viewBox="0 0 16 20" className="ml-[13px] w-[16px] h-[20px]">
          <rect x="0.5" y="0.5" width="15" height="19" rx="3" fill="#eeae5e" stroke="#b8803a" />
          <path d="M1 6.500h14M1 10.500h14M1 14.500h14" stroke="#fbe6c4" />
        </svg>
        <span className="ml-[22px] w-[117px]">localhost (utf8)</span>
        <span className={statusSep} />
        <Person className="ml-[13px] w-[18px] h-[19px]" />
        <span className="ml-[20px] w-[127px]">NIKOLAY (MAIN)</span>
        <span className={statusSep} />
        <svg viewBox="0 0 17 18" className="ml-[13px] w-[17px] h-[18px]">
          <rect x="0.5" y="0.5" width="16" height="17" fill="#eef2fa" stroke="#5a6f9c" />
          <rect x="0.5" y="0.5" width="16" height="4" fill="#d9584a" />
          <text x="8.5" y="15" textAnchor="middle" fontSize="10" fill="#345" fontFamily="Liberation Sans">
            31
          </text>
        </svg>
        <span className="ml-[22px] w-[96px]">23.08.2024</span>
        <span className={statusSep} />
        <span className="ml-[35px] w-[112px]">00:00:00:001</span>
        <span className={statusSep} />
        <span className="ml-[12px] w-[278px]">पानी एरोबिक्स</span>
        <span className={statusSep} />
        <svg viewBox="0 0 15 13" className="ml-[13px] mt-[6px] w-[15px] h-[13px]" fill="#888">
          <rect x="12" y="0" width="2" height="2" />
          <rect x="8" y="4" width="2" height="2" />
          <rect x="12" y="4" width="2" height="2" />
          <rect x="4" y="8" width="2" height="2" />
          <rect x="8" y="8" width="2" height="2" />
          <rect x="12" y="8" width="2" height="2" />
          <rect x="0" y="11" width="2" height="2" />
          <rect x="4" y="11" width="2" height="2" />
          <rect x="8" y="11" width="2" height="2" />
          <rect x="12" y="11" width="2" height="2" />
        </svg>
      </div>
    </div>
  );
}
